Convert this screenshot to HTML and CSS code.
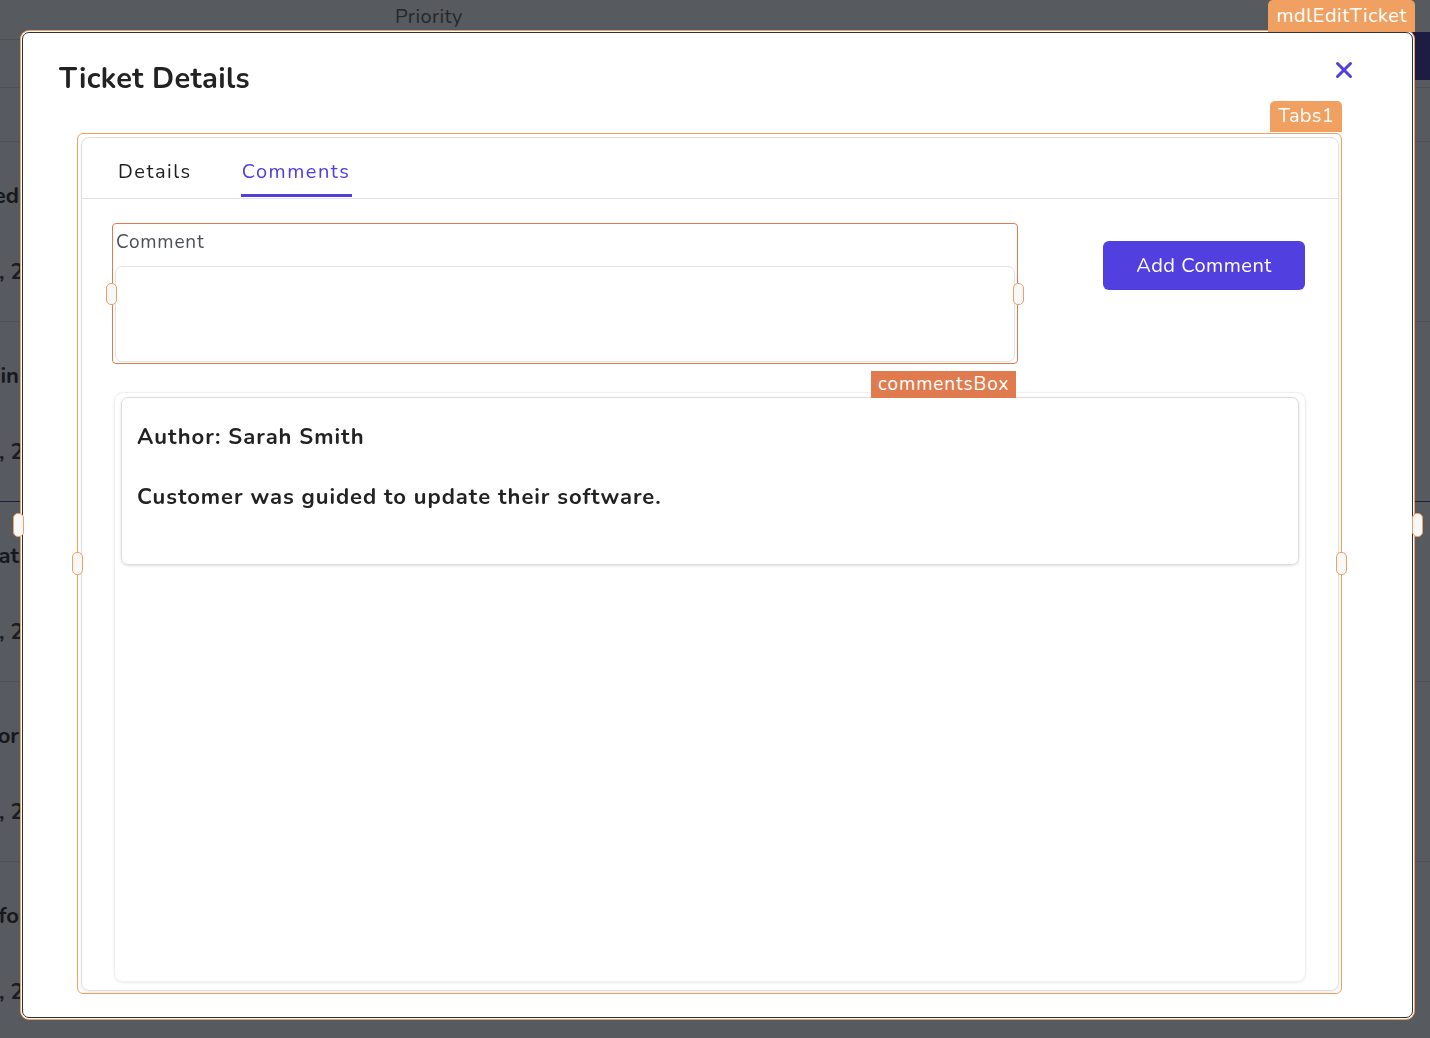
FILE: index.html
```html
<!DOCTYPE html>
<html lang="en">
<head>
<meta charset="utf-8">
<title>Ticket Details</title>
<link rel="stylesheet" href="styles.css">
</head>
<body>
<div class="page">
  <div class="page-head">
    <span class="page-col-priority">Priority</span>
    <span class="page-btn">+</span>
  </div>
  <div class="page-sub"></div>
  <div class="page-sub page-sub-2"></div>
  <div class="page-row"><div class="cell"><span class="strong">Resolved</span><span>Jan 12, 2024</span></div></div>
  <div class="page-row page-row-blue"><div class="cell"><span class="strong">Login</span><span>Jan 14, 2024</span></div></div>
  <div class="page-row"><div class="cell"><span class="strong">Updat</span><span>Jan 15, 2024</span></div></div>
  <div class="page-row"><div class="cell"><span class="strong">Error</span><span>Jan 18, 2024</span></div></div>
  <div class="page-row"><div class="cell"><span class="strong">Perf fo</span><span>Jan 20, 2024</span></div></div>
</div>

<div class="overlay">
  <div class="modal">
    <span class="sel-tag tag-modal">mdlEditTicket</span>
    <span class="handle handle-modal-l"></span>
    <span class="handle handle-modal-r"></span>
    <header class="modal-head">
      <h2 class="modal-title">Ticket Details</h2>
      <button class="close-btn" aria-label="Close">
        <svg width="18" height="18" viewBox="0 0 18 18"><path d="M2.5 2.5 L15.5 15.5 M15.5 2.5 L2.5 15.5" stroke="#4f3ee0" stroke-width="3" stroke-linecap="round"/></svg>
      </button>
    </header>

    <div class="tabs-sel">
      <span class="sel-tag tag-tabs">Tabs1</span>
      <span class="handle handle-tabs-l"></span>
      <span class="handle handle-tabs-r"></span>
      <div class="tabs-card">
        <nav class="tab-bar">
          <span class="tab">Details</span>
          <span class="tab tab-active">Comments</span>
        </nav>
        <div class="tab-body">
          <div class="form-row">
            <div class="comment-field">
              <span class="handle handle-field-l"></span>
              <span class="handle handle-field-r"></span>
              <label class="field-label">Comment</label>
              <div class="field-input"></div>
            </div>
            <button class="add-btn">Add Comment</button>
          </div>
          <div class="comments-box">
            <span class="sel-tag tag-box">commentsBox</span>
            <div class="comment-card">
              <p class="comment-author">Author: Sarah Smith</p>
              <p class="comment-text">Customer was guided to update their software.</p>
            </div>
          </div>
        </div>
      </div>
    </div>
  </div>
</div>
</body>
</html>
```

FILE: styles.css
```css
* { box-sizing: border-box; }

html, body {
  margin: 0;
  padding: 0;
  height: 100%;
}

body {
  font-family: "Nunito", Lato, "Noto Sans", sans-serif;
  background: #ffffff;
  color: #222;
  overflow: hidden;
}

/* background page */
.page {
  width: 1430px;
  height: 1038px;
  background: #fff;
  overflow: hidden;
}

.page-head {
  height: 40px;
  display: flex;
  align-items: flex-start;
  border-bottom: 1px solid #e2e2e2;
}

.page-col-priority {
  margin-left: 395px;
  margin-top: 3px;
  font-size: 20px;
  letter-spacing: 0.4px;
  color: #555;
}

.page-btn {
  margin-left: auto;
  margin-top: 32px;
  width: 60px;
  height: 48px;
  background: #3f33a8;
  color: #999;
  font-size: 26px;
  line-height: 48px;
  padding-left: 6px;
}

.page-sub {
  height: 48px;
  border-bottom: 1px solid #e2e2e2;
}

.page-sub-2 {
  height: 54px;
}

.page-row {
  height: 180px;
  border-bottom: 1px solid #e2e2e2;
}

.page-row-blue {
  border-bottom: 1px solid #2d3b8f;
}

.cell {
  margin-left: -66px;
  width: 85px;
  display: flex;
  flex-direction: column;
  align-items: flex-start;
  padding-top: 40px;
  gap: 48px;
  white-space: nowrap;
}

.cell span {
  font-size: 22px;
  color: #333;
  font-weight: 700;
  line-height: 28px;
}

.cell .strong {
  align-self: flex-end;
  display: flex;
  justify-content: flex-end;
  width: 85px;
  color: #222;
}

/* overlay */
.overlay {
  position: fixed;
  inset: 0;
  background: rgba(16, 20, 26, 0.7);
  padding: 32px 0 0 22px;
}

.modal {
  position: relative;
  width: 1391px;
  height: 986px;
  background: #fff;
  border: 1px solid #2f3236;
  border-radius: 7px;
  box-shadow: 0 0 0 1px #fff, 0 0 0 2px #f0a060;
}

.sel-tag {
  position: absolute;
  color: #fff;
  font-size: 20px;
  line-height: 30px;
  padding: 0 8px;
  border-radius: 5px 5px 0 0;
  white-space: nowrap;
}

.tag-modal {
  right: -3px;
  top: -33px;
  height: 32px;
  background: #f0a060;
  line-height: 31px;
  letter-spacing: 0.55px;
}

.tag-tabs {
  right: -1px;
  top: -33px;
  height: 31px;
  background: #f0a060;
  letter-spacing: 0.3px;
}

.tag-box {
  left: 756px;
  top: -22px;
  height: 27px;
  line-height: 27px;
  background: #e07b4f;
  border-radius: 0;
  font-size: 19px;
  padding: 0 7px;
  letter-spacing: 0.9px;
}

.handle {
  position: absolute;
  width: 11px;
  height: 23px;
  background: #f8f8f8;
  border: 1px solid #f0a060;
  border-radius: 5px;
  z-index: 3;
}

.handle-modal-l { left: -10px; top: 480px; height: 24px; }
.handle-modal-r { right: -11px; top: 480px; height: 24px; }

.modal-head {
  display: flex;
  align-items: flex-start;
  justify-content: space-between;
  padding: 28px 58px 0 36px;
  height: 100px;
}

.modal-title {
  margin: 0;
  font-size: 29px;
  font-weight: 700;
  color: #222;
  line-height: 36px;
  letter-spacing: 0.35px;
}

.close-btn {
  margin-top: -1px;
  width: 20px;
  height: 20px;
  padding: 1px;
  border: 0;
  background: transparent;
  display: flex;
}

/* tabs */
.tabs-sel {
  position: relative;
  margin-left: 54px;
  width: 1265px;
  height: 861px;
  border: 1px solid #f0a060;
  border-radius: 6px;
  padding: 3px 2px 2px 3px;
}

.handle-tabs-l { left: -6px; top: 418px; }
.handle-tabs-r { right: -6px; top: 418px; }

.tabs-card {
  height: 100%;
  border: 1px solid #dedede;
  border-radius: 8px;
  box-shadow: 0 2px 3px rgba(0,0,0,0.06);
  display: flex;
  flex-direction: column;
}

.tab-bar {
  height: 61px;
  border-bottom: 1px solid #e3e3e3;
  display: flex;
  gap: 49px;
  padding-left: 36px;
}

.tab {
  font-size: 20px;
  letter-spacing: 1.5px;
  color: #1e1e1e;
  padding-top: 20px;
  height: 59px;
}

.tab-active {
  color: #4f3ee0;
  border-bottom: 3px solid #4f3ee0;
  padding-left: 1px;
  width: 111px;
}

.tab-body {
  flex: 1;
  padding: 24px 32px 8px 30px;
  display: flex;
  flex-direction: column;
}

.form-row {
  display: flex;
  justify-content: space-between;
  align-items: flex-start;
}

.comment-field {
  position: relative;
  width: 906px;
  height: 141px;
  border: 1px solid #e07b4f;
  border-radius: 4px;
  padding: 4px 2px 1px 2px;
  display: flex;
  flex-direction: column;
}

.handle-field-l { left: -7px; top: 59px; height: 22px; }
.handle-field-r { right: -7px; top: 59px; height: 22px; }

.field-label {
  font-size: 19px;
  color: #4b5058;
  padding-left: 1px;
  line-height: 28px;
  height: 38px;
  letter-spacing: 0.8px;
}

.field-input {
  flex: 1;
  border: 1px solid #e3e3e3;
  border-radius: 7px;
  background: #fff;
}

.add-btn {
  margin-top: 18px;
  margin-right: 1px;
  width: 202px;
  height: 49px;
  border: 0;
  border-radius: 6px;
  background: #513fe0;
  color: #fff;
  font-family: inherit;
  font-size: 20px;
  letter-spacing: 0.5px;
}

.comments-box {
  position: relative;
  margin-top: 28px;
  margin-left: 2px;
  flex: 1;
  border: 1px solid #f0f0f0;
  border-radius: 9px;
  box-shadow: 0 1px 3px rgba(0,0,0,0.08);
  padding: 4px 6px;
}

.comment-card {
  height: 168px;
  border: 1px solid #dcdcdc;
  border-radius: 7px;
  box-shadow: 0 1px 3px rgba(0,0,0,0.12);
  padding: 24px 15px 0 15px;
}

.comment-card p {
  margin: 0;
  font-size: 22px;
  font-weight: 700;
  color: #222;
  line-height: 30px;
  letter-spacing: 0.95px;
}

.comment-card .comment-author {
  margin-bottom: 30px;
}
```
